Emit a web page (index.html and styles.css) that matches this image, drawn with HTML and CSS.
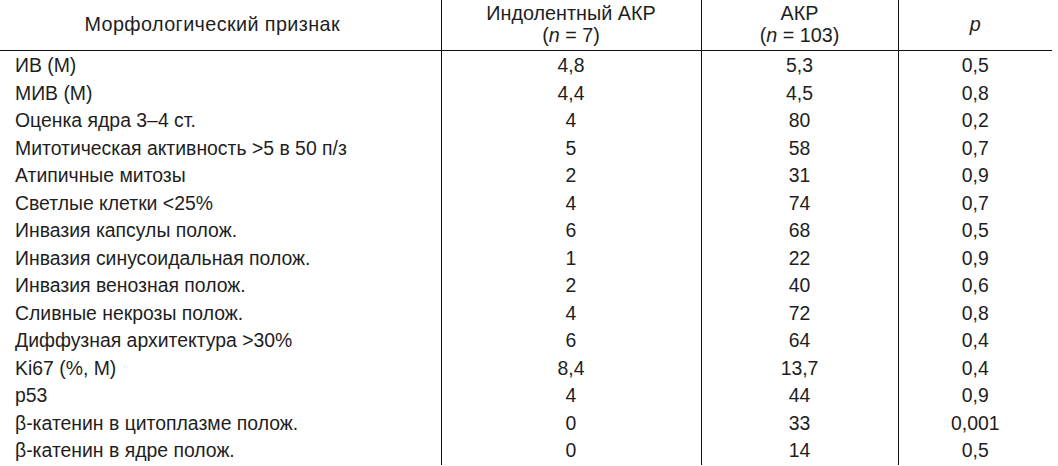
FILE: index.html
```html
<!DOCTYPE html>
<html lang="ru">
<head>
<meta charset="utf-8">
<link rel="stylesheet" href="styles.css">
</head>
<body>
<table class="tbl">
  <colgroup>
    <col class="c1"><col class="c2"><col class="c3"><col class="c4">
  </colgroup>
  <thead>
    <tr>
      <th class="h1">Морфологический признак</th>
      <th>Индолентный АКР<br>(<i>n</i> = 7)</th>
      <th>АКР<br>(<i>n</i> = 103)</th>
      <th><i>p</i></th>
    </tr>
  </thead>
  <tbody>
    <tr class="first"><td>ИВ (М)</td><td>4,8</td><td>5,3</td><td>0,5</td></tr>
    <tr><td>МИВ (М)</td><td>4,4</td><td>4,5</td><td>0,8</td></tr>
    <tr><td>Оценка ядра 3–4 ст.</td><td>4</td><td>80</td><td>0,2</td></tr>
    <tr><td>Митотическая активность &gt;5 в 50 п/з</td><td>5</td><td>58</td><td>0,7</td></tr>
    <tr><td>Атипичные митозы</td><td>2</td><td>31</td><td>0,9</td></tr>
    <tr><td>Светлые клетки &lt;25%</td><td>4</td><td>74</td><td>0,7</td></tr>
    <tr><td>Инвазия капсулы полож.</td><td>6</td><td>68</td><td>0,5</td></tr>
    <tr><td>Инвазия синусоидальная полож.</td><td>1</td><td>22</td><td>0,9</td></tr>
    <tr><td>Инвазия венозная полож.</td><td>2</td><td>40</td><td>0,6</td></tr>
    <tr><td>Сливные некрозы полож.</td><td>4</td><td>72</td><td>0,8</td></tr>
    <tr><td>Диффузная архитектура &gt;30%</td><td>6</td><td>64</td><td>0,4</td></tr>
    <tr><td>Ki67 (%, М)</td><td>8,4</td><td>13,7</td><td>0,4</td></tr>
    <tr><td>p53</td><td>4</td><td>44</td><td>0,9</td></tr>
    <tr><td>β-катенин в цитоплазме полож.</td><td>0</td><td>33</td><td>0,001</td></tr>
    <tr><td>β-катенин в ядре полож.</td><td>0</td><td>14</td><td>0,5</td></tr>
  </tbody>
</table>
</body>
</html>
```
FILE: styles.css
```css
html, body {
  margin: 0;
  padding: 0;
  background: #fff;
}
body {
  font-family: "Liberation Sans", Arial, sans-serif;
  font-size: 19.4px;
  color: #1e1e1e;
}
.tbl {
  width: 1052px;
  border-collapse: collapse;
  table-layout: fixed;
}
.c1 { width: 441px; }
.c2 { width: 260px; }
.c3 { width: 197px; }
.c4 { width: 154px; }
.tbl th {
  font-weight: normal;
  font-size: 19.8px;
  height: 50px;
  padding: 0;
  line-height: 21.6px;
  text-align: center;
  vertical-align: middle;
  border-bottom: 1px solid #111;
}
.tbl th.h1 {
  padding-right: 16px;
  letter-spacing: 0.4px;
}
.tbl td {
  padding: 0;
  height: 27.5px;
  line-height: 27.5px;
  text-align: center;
  white-space: nowrap;
}
.tbl td:first-child {
  text-align: left;
  padding-left: 15px;
}
.tbl th + th,
.tbl td + td {
  border-left: 1px solid #111;
}
.tbl tr.first td {
  padding-top: 1px;
}
```
